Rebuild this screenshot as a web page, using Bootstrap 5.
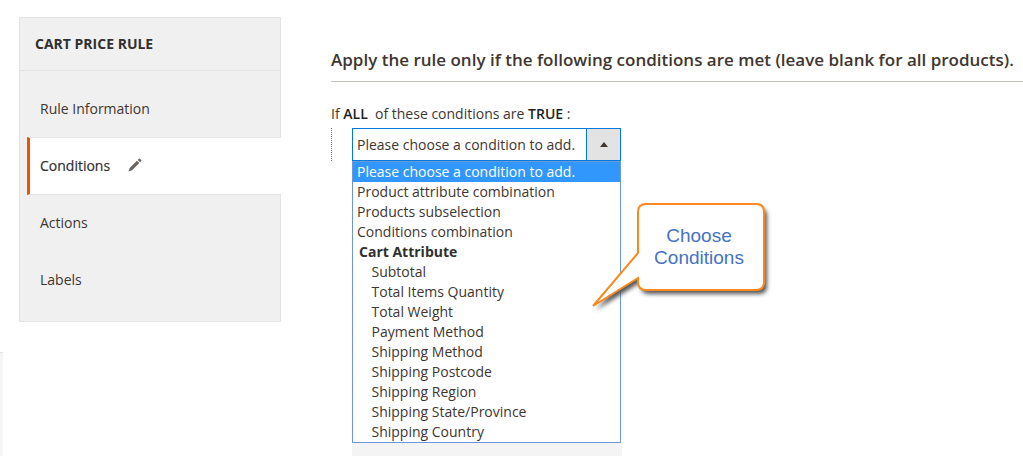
<!DOCTYPE html>
<html lang="en">
<head>
<meta charset="utf-8">
<title>Cart Price Rule</title>
<link href="https://cdn.jsdelivr.net/npm/bootstrap@5.3.0/dist/css/bootstrap.min.css" rel="stylesheet">
<style>
html,body{height:456px;overflow:hidden;background:#fff}
body{font-family:"Open Sans","Liberation Sans",sans-serif;font-size:14px;color:#41362f;position:relative}
.left-col{width:281px;flex:none}
.side-menu{margin:17px 0 0 19px;width:262px;background:#f0f0f0;border:1px solid #e3e3e3}
.side-title{height:53px;padding:0 0 2px 15px;border-bottom:1px solid #e3e3e3;font-size:14px;font-weight:700;color:#303030;display:flex;align-items:center}
.side-item{display:flex;align-items:center;padding:0 0 2px 20px;color:#41362f;text-decoration:none;height:57px}
.side-item.first{height:66px;padding-top:10px}
.side-item.active-item{background:#fff;margin:0 -1px 0 7px;padding-left:10px;border-left:3px solid #eb5202;border-top:1px solid #e3e3e3;border-bottom:1px solid #e3e3e3;height:58px;color:#303030;-webkit-text-stroke:.2px #303030}
.side-item.last{height:69px;padding-bottom:14px}
.pen{margin-left:17px;width:16px;height:16px}
.corner-piece{width:3px;height:104px;margin-top:30px;background:#f4f4f4;border-top:1px solid #e3e3e3}
.main-col{padding:47px 0 0 50px;flex:1;min-width:0}
.rule-head{font-size:17px;font-weight:600;color:#41362f;line-height:26px;height:35px;border-bottom:1px solid #c4c1bc;margin:0;white-space:nowrap}
.cond-line{margin:22px 0 0;height:20px;line-height:20px;color:#41362f;white-space:pre}
.cond-line b{color:#1f1f1f;font-weight:600}
.cond-body{margin-top:4px;border-left:1px dotted #777;padding-left:20px;height:33px}
.pick{width:269px;height:33px;border:1px solid #007bdb;display:flex;background:#fff;position:relative}
.pick-text{flex:1;padding-left:4px;line-height:31px}
.pick-btn{width:34px;background:#e3e3e3;border-left:1px solid #007bdb;display:flex;align-items:center;justify-content:center}
.tri{width:0;height:0;border-left:4.5px solid transparent;border-right:4.5px solid transparent;border-bottom:5px solid #41362f}
.opts{margin:0 0 0 21px;width:269px;height:282px;border:1px solid #6b97dc;background:#fff;list-style:none;padding:0;line-height:20px;white-space:nowrap}
.opts li{height:20px;padding-left:4px}
.opts li.sel{background:#3297fd;color:#fff}
.opts li.grp{font-weight:700;padding-left:6px;color:#303030}
.opts li.sub{padding-left:18.5px}
.under{margin-left:21px;width:270px;height:14px;background:#f4f4f4}
.call-svg{position:absolute;left:580px;top:190px;width:200px;height:130px}
.call-text{position:absolute;left:638px;top:225px;width:122px;text-align:center;font-family:"Liberation Sans",Arial,sans-serif;font-size:19px;line-height:22px;color:#4472c4}
</style>
</head>
<body>
<div class="d-flex">
  <div class="left-col">
    <nav class="side-menu">
      <div class="side-title">CART PRICE RULE</div>
      <a class="side-item first" href="#">Rule Information</a>
      <a class="side-item active-item" href="#">Conditions
        <svg class="pen" viewBox="0 0 16 16"><path fill="#6a6561" d="M1.5 14.5l1.2-3.6 7.2-7.2 2.4 2.4-7.2 7.2zM10.7 2.9l1.2-1.2a.7.7 0 0 1 1 0l1.4 1.4a.7.7 0 0 1 0 1l-1.2 1.2z"/></svg>
      </a>
      <a class="side-item" href="#">Actions</a>
      <a class="side-item last" href="#">Labels</a>
    </nav>
    <div class="corner-piece"></div>
  </div>
  <div class="main-col">
    <h2 class="rule-head">Apply the rule only if the following conditions are met (leave blank for all products).</h2>
    <p class="cond-line">If <b>ALL</b>  of these conditions are <b>TRUE</b> :</p>
    <div class="cond-body">
      <div class="pick">
        <div class="pick-text">Please choose a condition to add.</div>
        <div class="pick-btn"><span class="tri"></span></div>
      </div>
    </div>
    <ul class="opts">
      <li class="sel">Please choose a condition to add.</li>
      <li>Product attribute combination</li>
      <li>Products subselection</li>
      <li>Conditions combination</li>
      <li class="grp">Cart Attribute</li>
      <li class="sub">Subtotal</li>
      <li class="sub">Total Items Quantity</li>
      <li class="sub">Total Weight</li>
      <li class="sub">Payment Method</li>
      <li class="sub">Shipping Method</li>
      <li class="sub">Shipping Postcode</li>
      <li class="sub">Shipping Region</li>
      <li class="sub">Shipping State/Province</li>
      <li class="sub">Shipping Country</li>
    </ul>
    <div class="under"></div>
  </div>
</div>
<svg class="call-svg" viewBox="580 190 200 130">
  <defs><filter id="sh" x="-20%" y="-20%" width="140%" height="140%"><feGaussianBlur stdDeviation="2"/></filter></defs>
  <path transform="translate(3 4)" filter="url(#sh)" fill="#555" d="M646 204H756Q764 204 764 212V282Q764 290 756 290H646Q638 290 638 282V278L593 306L638 253V212Q638 204 646 204Z"/>
  <path fill="#fff" stroke="#fb8a1e" stroke-width="2" d="M646 204H756Q764 204 764 212V282Q764 290 756 290H646Q638 290 638 282V278L593 306L638 253V212Q638 204 646 204Z"/>
</svg>
<div class="call-text">Choose<br>Conditions</div>
<script src="https://cdn.jsdelivr.net/npm/bootstrap@5.3.0/dist/js/bootstrap.bundle.min.js"></script>
</body>
</html>
